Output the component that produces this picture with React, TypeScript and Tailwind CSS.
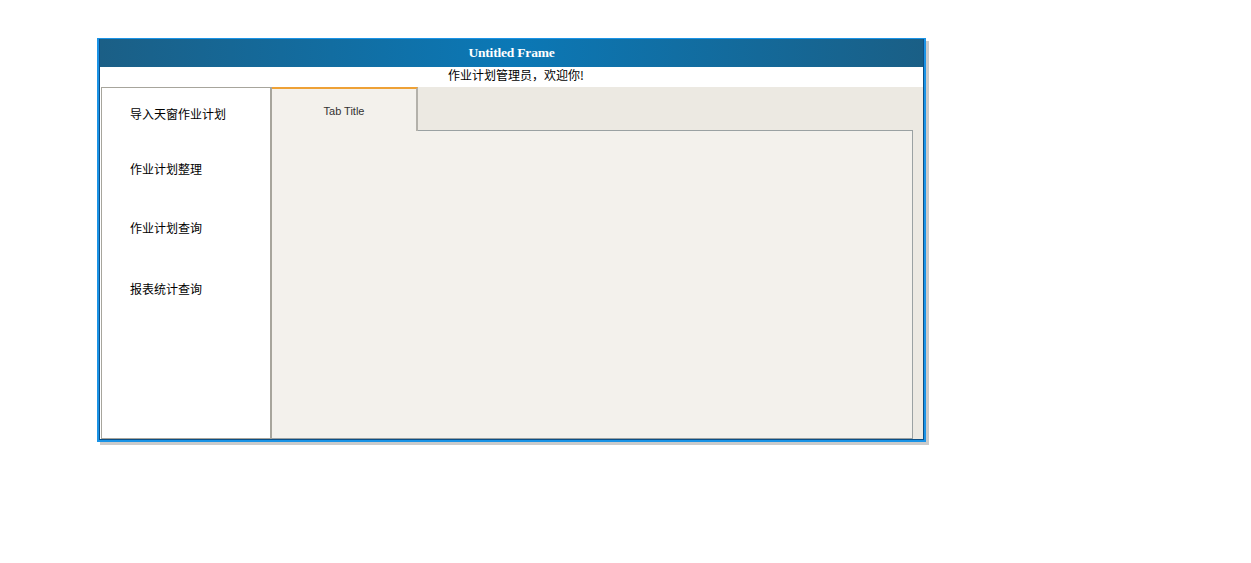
import React from "react";

const menuItems = [
  { label: "导入天窗作业计划", mt: "mt-[18px]" },
  { label: "作业计划整理", mt: "mt-[39px]" },
  { label: "作业计划查询", mt: "mt-[43px]" },
  { label: "报表统计查询", mt: "mt-[45px]" },
];

const cjk = "font-['Noto_Sans_CJK_SC','Noto_Sans',sans-serif]";

const App: React.FC = () => {
  return (
    <div className="min-h-[563px] w-full bg-white pl-[97px] pt-[38px]">
      {/* Frame */}
      <div className="w-[829px] h-[404px] border-2 border-t-[1px] border-[#1a93e6] shadow-[3px_3px_0_#cbcbcb] flex flex-col">
        <div className="flex-1 flex flex-col border-x border-b border-[#0b4f86]">
          {/* Title bar */}
          <div className="h-[28px] flex items-center justify-center bg-[linear-gradient(to_right,#1b5f86_0%,#0b78b6_50%,#1a5f86_100%)]">
            <span className="font-['Liberation_Serif',serif] font-bold text-[13.5px] text-white tracking-[-0.2px]">
              Untitled Frame
            </span>
          </div>

          {/* Welcome */}
          <div className="h-[20px] bg-white flex items-start pl-[348px]">
            <span className={`${cjk} text-[12px] leading-[16px] text-black`}>
              作业计划管理员，欢迎你!
            </span>
          </div>

          {/* Body */}
          <div className="flex-1 flex bg-[#ece9e2]">
            {/* Sidebar */}
            <div className="w-[172px] bg-white pl-px flex">
              <div className="flex-1 border border-r-2 border-[#a7a59c] bg-white flex flex-col pl-[28px]">
                {menuItems.map((item) => (
                  <div
                    key={item.label}
                    className={`${item.mt} ${cjk} text-[12px] leading-[16px] text-black`}
                  >
                    {item.label}
                  </div>
                ))}
              </div>
            </div>

            {/* Tabs */}
            <div className="flex-1 flex flex-col pr-[10px]">
              <div className="h-[44px] flex">
                <div className="w-[146px] bg-[#f3f1ec] border-t-2 border-[#eea136] border-r-2 border-r-[#b3b1aa] flex justify-center pt-[15px]">
                  <span className="font-['Liberation_Sans',Arial,sans-serif] text-[11px] leading-[14px] text-[#333333]">
                    Tab Title
                  </span>
                </div>
                <div className="flex-1 border-b border-[#9aa1a2]" />
              </div>
              <div className="flex-1 bg-[#f3f1ec] border-r border-b border-[#9aa1a2]" />
            </div>
          </div>
        </div>
      </div>
    </div>
  );
};

export default App;
